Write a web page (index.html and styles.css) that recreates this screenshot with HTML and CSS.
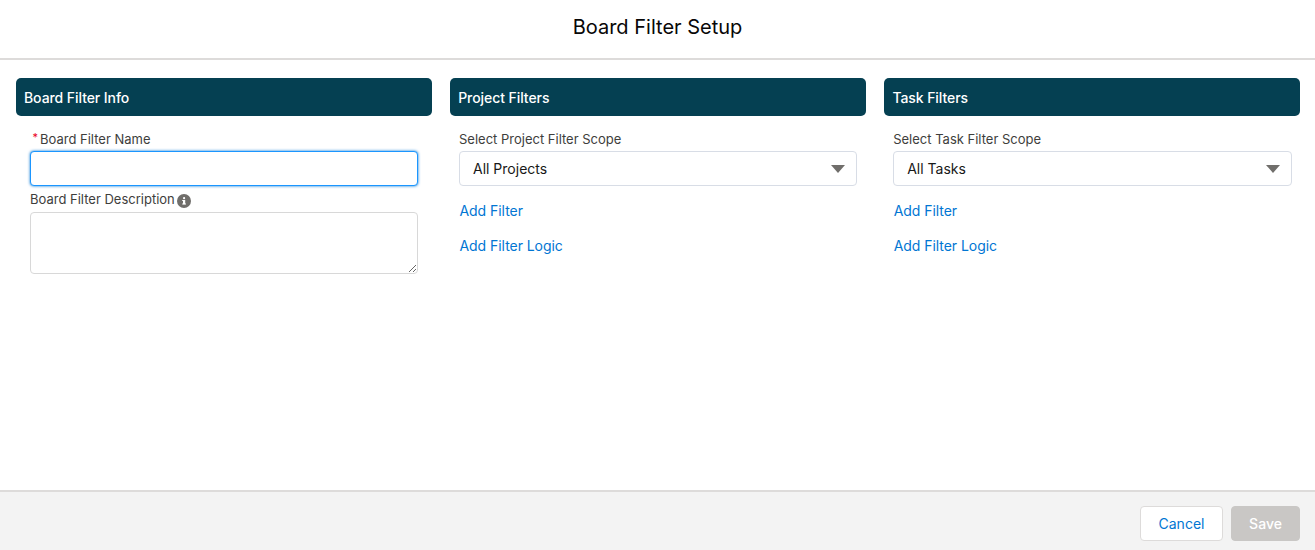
FILE: index.html
```html
<!DOCTYPE html>
<html lang="en">
<head>
<meta charset="utf-8">
<title>Board Filter Setup</title>
<link rel="stylesheet" href="styles.css">
</head>
<body>
<div class="modal">
  <header class="modal-header"><h1>Board Filter Setup</h1></header>
  <main class="modal-body">
    <section class="col">
      <h2 class="col-title">Board Filter Info</h2>
      <div class="col-content info">
        <label class="label" for="name"><abbr class="req">*</abbr>Board Filter Name</label>
        <input id="name" class="name-input" type="text">
        <div class="label desc-label"><span>Board Filter Description</span>
          <svg class="info-icon" viewBox="0 0 14 14" width="14" height="14" aria-hidden="true"><circle cx="7" cy="7" r="7" fill="#706e6b"/><rect x="6" y="6" width="2.2" height="4.2" fill="#fff"/><rect x="5.2" y="6" width="1.2" height="1" fill="#fff"/><rect x="5.2" y="9.5" width="3.8" height="1" fill="#fff"/><circle cx="7.1" cy="4.2" r="1.1" fill="#fff"/></svg>
        </div>
        <textarea class="desc-input"></textarea>
      </div>
    </section>
    <section class="col">
      <h2 class="col-title">Project Filters</h2>
      <div class="col-content">
        <div class="label">Select Project Filter Scope</div>
        <div class="select"><span>All Projects</span><i class="caret"></i></div>
        <a class="link" href="#">Add Filter</a>
        <a class="link" href="#">Add Filter Logic</a>
      </div>
    </section>
    <section class="col">
      <h2 class="col-title">Task Filters</h2>
      <div class="col-content">
        <div class="label">Select Task Filter Scope</div>
        <div class="select"><span>All Tasks</span><i class="caret"></i></div>
        <a class="link" href="#">Add Filter</a>
        <a class="link" href="#">Add Filter Logic</a>
      </div>
    </section>
  </main>
  <footer class="modal-footer">
    <button class="btn cancel" type="button">Cancel</button>
    <button class="btn save" type="button">Save</button>
  </footer>
</div>
</body>
</html>
```
FILE: styles.css
```css
* { box-sizing: border-box; }
html, body { margin: 0; height: 100%; }
body { font-family: Inter, "Liberation Sans", sans-serif; color: #080707; background: #fff; overflow: hidden; }
.modal { display: flex; flex-direction: column; height: 550px; }
.modal-header { height: 60px; border-bottom: 2px solid #dddbda; display: flex; align-items: center; justify-content: center; padding-bottom: 5px; }
.modal-header h1 { margin: 0; font-size: 20px; font-weight: 400; line-height: 28px; }
.modal-body { flex: 1; display: grid; grid-template-columns: repeat(3, 416px); column-gap: 18.2px; padding: 18px 0 0 16px; align-items: start; }
.col-title { margin: 0; height: 38px; background: #054052; border-radius: 5px; color: #fff; font-size: 14px; font-weight: 500; line-height: 40px; padding-left: 8px; letter-spacing: -0.07px; }
.col-content { display: flex; flex-direction: column; align-items: flex-start; padding: 14px 8.8px 0; }
.col-content.info { padding: 14px 14px 0; }
.label { font-size: 13px; line-height: 18px; color: #3e3e3c; height: 18px; display: flex; align-items: center; }
.req { color: #ea001e; text-decoration: none; width: 8px; text-align: right; margin-right: 2px; font-size: 11px; line-height: 14px; align-self: flex-start; }
.name-input { display: block; width: 388px; height: 35px; margin-top: 3px; border: 1px solid #1b96ff; border-radius: 4px; box-shadow: 0 0 3px #0176d3; outline: none; background: #fff; }
.desc-label { margin-top: 4px; gap: 2px; }
.info-icon { display: block; margin-top: 3px; }
.desc-input { display: block; width: 388px; height: 62px; margin-top: 4px; border: 1px solid #d8d8d8; border-radius: 4px; outline: none; background: #fff; }
.select { width: 398.4px; height: 35px; margin-top: 3px; border: 1px solid #d8dde6; border-radius: 4px; display: flex; align-items: center; justify-content: space-between; padding: 0 11px 0 13px; font-size: 14px; color: #181818; }
.caret { width: 0; height: 0; border-left: 7px solid transparent; border-right: 7px solid transparent; border-top: 8px solid #706e6b; }
.link { color: #0176d3; font-size: 14px; line-height: 20px; text-decoration: none; margin-left: 0.5px; margin-top: 15px; letter-spacing: -0.05px; }
.modal-footer { height: 60px; background: #f3f3f3; border-top: 2px solid #dddbda; display: flex; justify-content: flex-end; align-items: flex-start; gap: 8px; padding: 14px 15px 0 0; }
.btn { height: 35px; border-radius: 4px; font-family: inherit; font-size: 14px; }
.cancel { width: 83px; background: #fff; color: #0176d3; border: 1px solid #dddbda; }
.save { width: 69px; background: #c9c7c5; color: #fff; border: 1px solid #c9c7c5; font-weight: 500; }
```
